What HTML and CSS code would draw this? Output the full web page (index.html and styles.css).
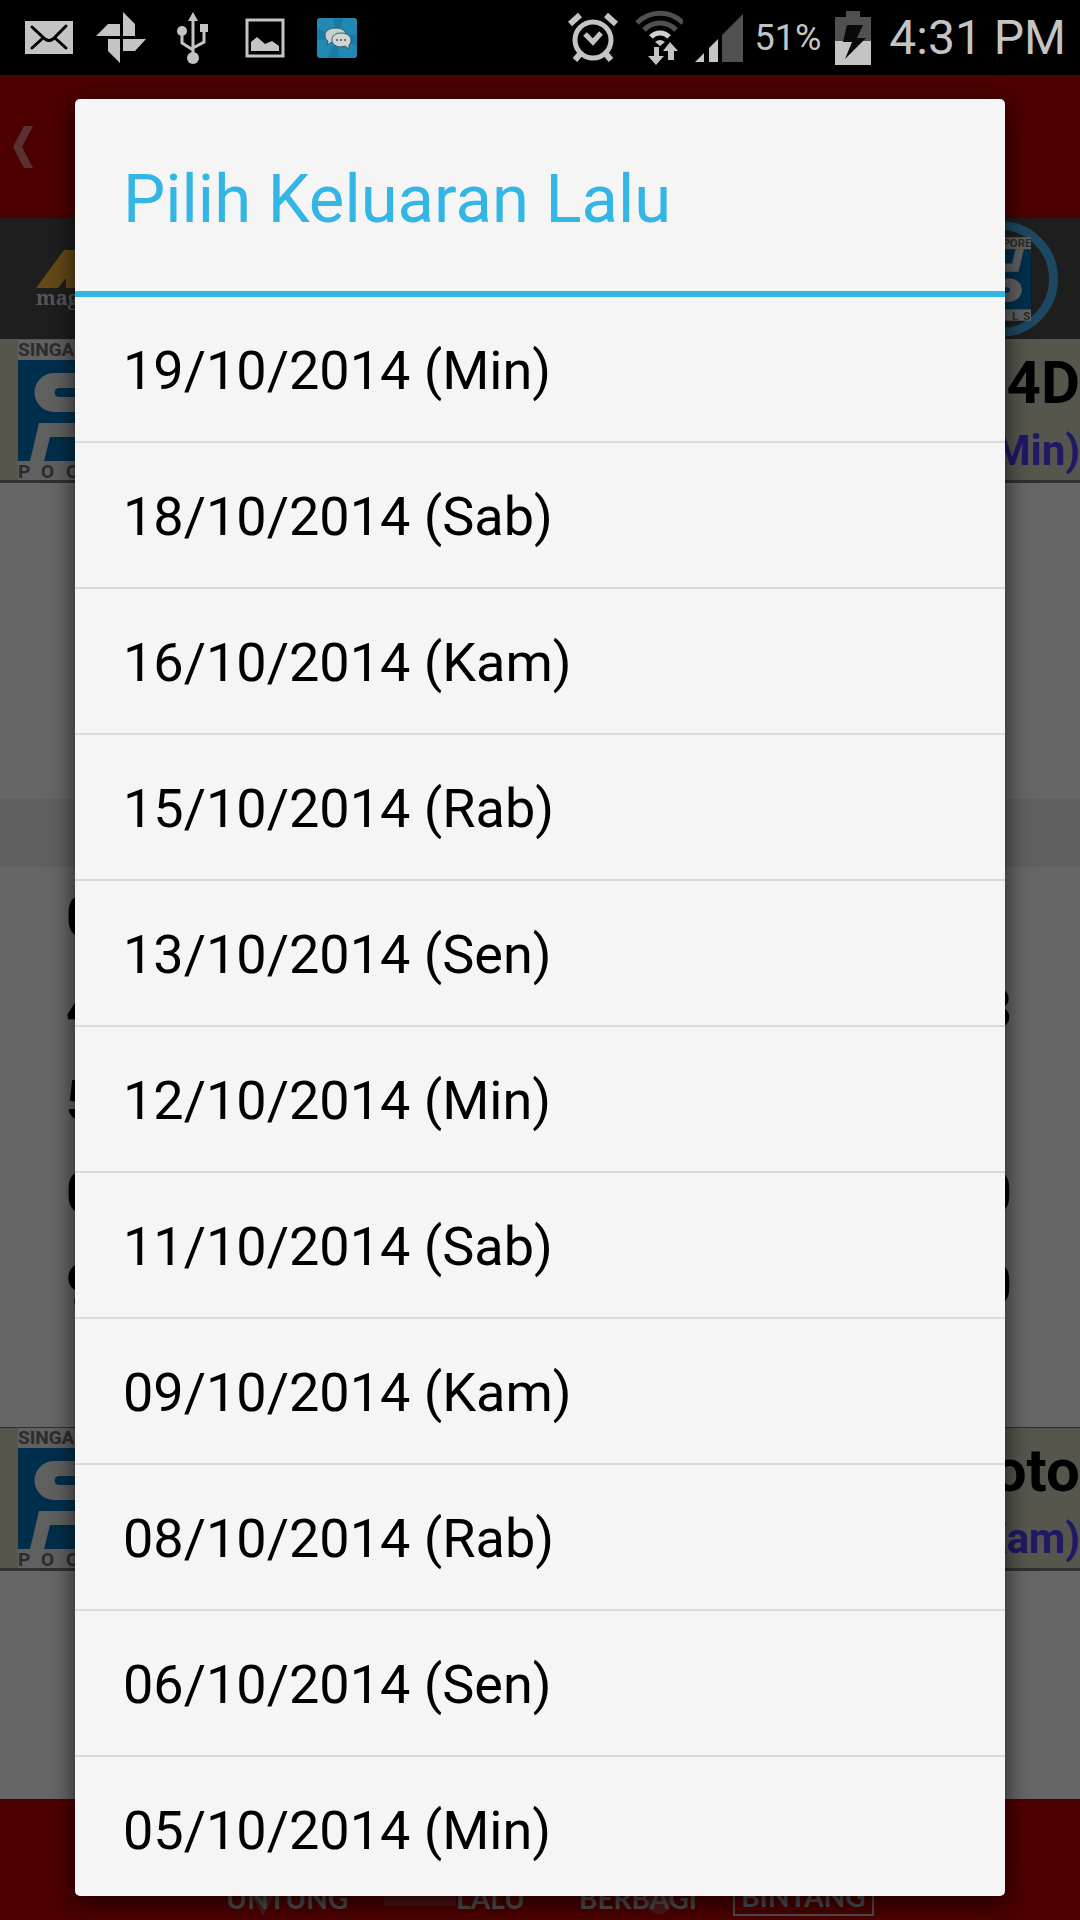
FILE: index.html
```html
<!DOCTYPE html>
<html lang="id">

<head>
  <meta charset="UTF-8">
  <meta name="viewport" content="width=device-width, initial-scale=1.0">
  <title>Pilih Keluaran Lalu</title>
  <link rel="stylesheet" href="styles.css">
</head>

<body>
  <div class="screen">
    <div class="status-bar">
      <div class="status-left">
        <svg class="notice" viewBox="0 0 72 56">
          <rect x="12" y="11" width="48" height="33" fill="#c4c4c4"/>
          <path d="M19 17l13 12q4 3 8 0l13-13M19 38l11-10M53 38L42 28" fill="none" stroke="#000" stroke-width="3" stroke-linecap="round"/>
        </svg>
        <svg class="notice" viewBox="0 0 72 56" fill="#c4c4c4">
          <path d="M38 2l12 12v12H38zM11 26l12-12h12v12zM23 29h12v24L23 41zM38 29h23L50 41H38z"/>
        </svg>
        <svg class="notice" viewBox="0 0 72 56" fill="#c4c4c4">
          <path d="M36 2l5 9H31zM43 14h8v8h-8z"/>
          <circle cx="25" cy="21" r="5"/>
          <circle cx="36" cy="48" r="6"/>
          <path d="M36 8v38M25 24v9l11 7M47 20v12l-11 6" fill="none" stroke="#c4c4c4" stroke-width="3"/>
        </svg>
        <svg class="notice" viewBox="0 0 72 56">
          <rect x="18" y="10" width="36" height="36" fill="none" stroke="#c4c4c4" stroke-width="3"/>
          <path d="M22 41v-9l6-5 8 7 7-3 7 5v5z" fill="#c4c4c4"/>
        </svg>
        <svg class="notice" viewBox="0 0 72 56">
          <rect x="16" y="8" width="40" height="40" rx="3" fill="#2288b4"/>
          <path d="M36 28L16 18v12zM36 28L26 48h12zM36 28l20 8V24zM36 28L42 8H32z" fill="#1c7aa8"/>
          <path d="M35 18c-7 0-11 3-11 7 0 3 1 5 3 6l-1 4 5-3h6c6-1 8-4 8-7 0-4-4-7-10-7z" fill="#c8cfcf" stroke="#285d73"/>
          <path d="M40 23c-6 0-9 3-9 7s4 7 9 7l4-1 4 3v-4c1-1 2-3 2-5 0-4-4-7-10-7z" fill="#d4d4d0" stroke="#285d73"/>
          <path d="M35 30h2M39 30h2M43 30h2" stroke="#517c83" stroke-width="2"/>
        </svg>
      </div>
      <div class="status-right">
        <svg width="52" height="56" viewBox="-2 -4 52 56" fill="none" stroke="#c4c4c4">
          <circle cx="24" cy="26" r="18" stroke-width="5"/>
          <path d="M1 10l10-9M47 10L37 1" stroke-width="6"/>
          <path d="M11 40l-5 6M37 40l5 6" stroke-width="6"/>
          <path d="M16 20l8 8 8-9" stroke-width="5"/>
        </svg>
        <svg width="52" height="56" viewBox="-3 0 52 56" fill="none" stroke-width="5">
          <path d="M3 13a32 32 0 0 1 46 0M10 20a22 22 0 0 1 32 0" stroke="#505050"/>
          <path d="M17 27a12 12 0 0 1 18 0" stroke="#d0d0d0"/>
          <path d="M26 36l-5-4q5-4 10 0zM20 37h5v9h5l-8 9-8-9h6zM34 50v-9h-5l7-9 8 9h-4v9z" fill="#c4c4c4"/>
        </svg>
        <svg width="48" height="56" viewBox="0 -4 48 56">
          <path d="M0 48l9-9v9zM14 34l9-9v23h-9z" fill="#c4c4c4"/>
          <path d="M27 21L48 0v48H27z" fill="#505050"/>
        </svg>
        <span class="battery-level">51%</span>
        <svg width="40" height="56" viewBox="-2 -1 40 56">
          <path d="M11 0h14v6h11v24H0V6h11z" fill="#505050"/>
          <rect y="30" width="36" height="24" fill="#c4c4c4"/>
          <path d="M12 14h16l-6 13h9L10 48l7-17H8z" fill="#0a0a0a"/>
        </svg>
        <span class="clock">4:31 PM</span>
      </div>
    </div>

    <div class="app">
      <div class="action-bar">
        <button class="back" aria-label="Kembali">
          <svg width="20" height="42" viewBox="0 0 20 42"><path d="M11 0h9L9 21l11 21h-9L0 21z" fill="#e07c7c"/></svg>
        </button>
      </div>

      <div class="tabs">
        <a href="#magnum" class="tab-magnum">
          <svg width="80" height="38" viewBox="0 0 80 38"><path d="M28 0h52v38H30V28l-8 10H0z" fill="#f5b63e"/></svg>
          <span>magnum</span>
        </a>
        <a href="#singapore" class="tab-pools">
          <svg width="62" height="84" viewBox="0 0 104 140">
            <rect width="104" height="140" fill="#f0f0f0"/>
            <text y="16" class="logo-text">SINGAPORE</text>
            <rect y="20" width="104" height="101" fill="#0076bb"/>
            <path d="M46 108h23a19 19 0 0 0 0-39H46v15h18a4 4 0 0 1 0 9H46zM46 58h37l9-38H78l-6 24H46z" fill="#f0f0f0"/>
            <text x="0 23 48 72 91" y="138" class="logo-text">POOLS</text>
          </svg>
        </a>
      </div>

      <div class="banner">
        <svg width="104" height="140" viewBox="0 0 104 140">
          <rect width="104" height="140" fill="#f0f0f0"/>
          <text y="16" class="logo-text">SINGAPORE</text>
          <rect y="20" width="104" height="101" fill="#0076bb"/>
          <path id="pools-s" d="M86 33H36a19 19 0 0 0 0 39h50V57H41a4 4 0 0 1 0-9h45zM86 83H21l-9 38h14l6-24h54z" fill="#f0f0f0"/>
          <text x="0 23 48 72 91" y="138" class="logo-text">POOLS</text>
        </svg>
        <div class="banner-text">
          <h2>4D</h2>
          <p>(Min)</p>
        </div>
      </div>
      <div class="prizes"></div>
      <div class="band"></div>
      <div class="numbers">
        <div class="number-row"><span>0</span></div>
        <div class="number-row"><span>4</span><span>3</span></div>
        <div class="number-row"><span>5</span></div>
        <div class="number-row"><span>0</span><span>0</span></div>
        <div class="number-row"><span>9</span><span>0</span></div>
      </div>

      <div class="banner banner-toto">
        <svg width="104" height="140" viewBox="0 0 104 140">
          <rect width="104" height="140" fill="#f0f0f0"/>
          <text y="16" class="logo-text">SINGAPORE</text>
          <rect y="20" width="104" height="101" fill="#0076bb"/>
          <use href="#pools-s"/>
          <text x="0 23 48 72 91" y="138" class="logo-text">POOLS</text>
        </svg>
        <div class="banner-text">
          <h2>Toto</h2>
          <p>(Kam)</p>
        </div>
      </div>

      <div class="bottom-bar">
        <a href="#untung" class="nav-untung">UNTUNG</a>
        <a href="#lalu" class="nav-lalu">LALU</a>
        <a href="#berbagi" class="nav-berbagi">BERBAGI</a>
        <a href="#bintang" class="nav-bintang">BINTANG</a>
      </div>
    </div>

    <div class="overlay">
      <div class="dialog" role="dialog" aria-labelledby="dialog-title">
        <h1 class="dialog-title" id="dialog-title">Pilih Keluaran Lalu</h1>
        <ul class="dates">
          <li><button>19/10/2014 (Min)</button></li>
          <li><button>18/10/2014 (Sab)</button></li>
          <li><button>16/10/2014 (Kam)</button></li>
          <li><button>15/10/2014 (Rab)</button></li>
          <li><button>13/10/2014 (Sen)</button></li>
          <li><button>12/10/2014 (Min)</button></li>
          <li><button>11/10/2014 (Sab)</button></li>
          <li><button>09/10/2014 (Kam)</button></li>
          <li><button>08/10/2014 (Rab)</button></li>
          <li><button>06/10/2014 (Sen)</button></li>
          <li><button>05/10/2014 (Min)</button></li>
        </ul>
      </div>
    </div>
  </div>
</body>

</html>
```

FILE: styles.css
```css
* {
  margin: 0;
  padding: 0;
  box-sizing: border-box;
}

body {
  font-family: Roboto, "Noto Sans", sans-serif;
  background: #000;
  color: #000;
}

a {
  color: inherit;
  text-decoration: none;
}

button {
  border: none;
  background: none;
  font: inherit;
  color: inherit;
}

svg {
  display: block;
  flex-shrink: 0;
}

.screen {
  position: relative;
  display: flex;
  flex-direction: column;
  height: 100vh;
  overflow: hidden;
}

/* status bar */
.status-bar {
  display: flex;
  justify-content: space-between;
  align-items: center;
  height: 75px;
  flex-shrink: 0;
  padding: 0 14px 0 13px;
  background: #000;
  color: #c4c4c4;
}

.status-left,
.status-right {
  display: flex;
  align-items: center;
}

.status-right {
  gap: 12px;
}

.notice {
  width: 72px;
  height: 56px;
}

.battery-level {
  font-size: 36px;
}

.clock {
  margin-left: 4px;
  font-size: 48px;
}

/* app behind the dialog */
.app {
  flex: 1;
  display: flex;
  flex-direction: column;
  min-height: 0;
  background: #fff;
}

.action-bar {
  display: flex;
  align-items: center;
  height: 143px;
  padding-left: 13px;
  background: #c00000;
}

.tabs {
  display: flex;
  justify-content: space-between;
  align-items: center;
  height: 121px;
  padding: 0 22px 0 36px;
  background: #4b4b4b;
}

.tab-magnum {
  color: #d8d8d8;
  font: bold 20px/20px "Noto Serif", "Liberation Serif", serif;
}

.tab-pools {
  display: flex;
  align-items: center;
  justify-content: center;
  width: 116px;
  height: 116px;
  border: 9px solid #46b4f5;
  border-radius: 50%;
}

.logo-text {
  font: bold 19px Roboto, sans-serif;
  fill: #6e6e6e;
}

.banner {
  display: flex;
  justify-content: space-between;
  height: 144px;
  padding: 1px 0 0 18px;
  border-bottom: 3px solid #787878;
  background: #d6d6c0;
}

.banner-toto {
  border-top: 1px solid #787878;
  padding-top: 0;
}

.banner-text {
  padding-top: 8px;
  text-align: right;
  font-weight: 700;
}

.banner-text h2 {
  font-size: 60px;
  line-height: 70px;
}

.banner-text p {
  font-size: 42px;
  line-height: 66px;
  color: #4e40ff;
}

.prizes {
  height: 316px;
}

.band {
  height: 68px;
  background: #eee;
}

.numbers {
  padding: 4px 68px 96px 66px;
}

.number-row {
  display: flex;
  justify-content: space-between;
  font-size: 56px;
  font-weight: 700;
  line-height: 92px;
}

.bottom-bar {
  display: flex;
  justify-content: center;
  align-items: flex-end;
  gap: 36px;
  height: 121px;
  margin-top: auto;
  padding: 0 0 4px 20px;
  background: #c00000;
  color: #c8c8c8;
  font: bold 28px/36px Lato, sans-serif;
}

.bottom-bar a {
  position: relative;
}

.nav-untung::after {
  content: "";
  position: absolute;
  left: 26px;
  bottom: 0;
  border: 11px solid transparent;
  border-top: 20px solid rgba(200, 200, 200, 0.35);
  border-bottom: none;
}

.nav-lalu {
  display: flex;
  margin-right: 18px;
}

.nav-lalu::before {
  content: "";
  width: 72px;
  height: 26px;
  background: rgba(200, 200, 200, 0.25);
}

.nav-berbagi::after {
  content: "";
  position: absolute;
  right: 26px;
  bottom: 2px;
  width: 24px;
  height: 24px;
  border-radius: 50%;
  background: rgba(200, 200, 200, 0.3);
}

.nav-bintang {
  padding: 0 6px;
  border: 2px solid #c8c8c8;
}

/* dialog */
.overlay {
  position: absolute;
  top: 75px;
  right: 0;
  bottom: 0;
  left: 0;
  padding: 24px 75px;
  background: rgba(0, 0, 0, 0.6);
}

.dialog {
  display: flex;
  flex-direction: column;
  height: 100%;
  overflow: hidden;
  border-radius: 5px;
  background: #f5f5f5;
  box-shadow: 0 6px 24px rgba(0, 0, 0, 0.7);
}

.dialog-title {
  padding: 8px 48px 0;
  border-bottom: 6px solid #33b5e5;
  color: #33b5e5;
  font-size: 67px;
  font-weight: 400;
  line-height: 184px;
}

.dates {
  list-style: none;
}

.dates li {
  border-bottom: 2px solid #d9d9d9;
}

.dates button {
  display: block;
  width: 100%;
  padding: 4px 48px 0;
  font-size: 54px;
  line-height: 140px;
  text-align: left;
}
```
